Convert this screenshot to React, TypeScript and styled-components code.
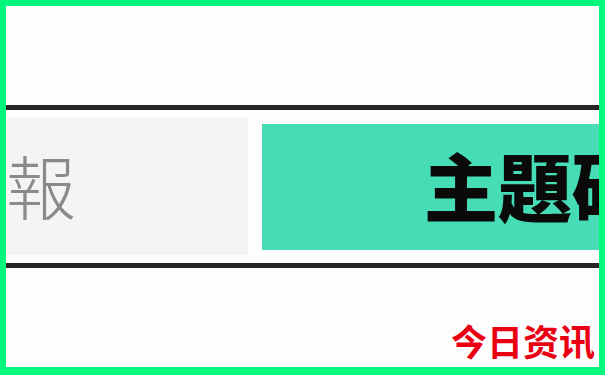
import React from "react";
import styled, { createGlobalStyle } from "styled-components";

const Global = createGlobalStyle`
  html, body { margin: 0; padding: 0; background: #ffffff; }
  body { font-family: "Noto Sans CJK TC", "Noto Sans CJK SC", "Noto Sans", sans-serif; }
`;

const Frame = styled.div`
  box-sizing: border-box;
  width: 605px;
  height: 375px;
  border-style: solid;
  border-color: #02f87c;
  border-width: 6px 6px 8px 6px;
  background: #fdfdfd;
  overflow: hidden;
  display: flex;
  flex-direction: column;
  padding-top: 99px;
`;

const Banner = styled.div`
  height: 163px;
  box-sizing: border-box;
  border-top: 5px solid #262626;
  border-bottom: 5px solid #262626;
  display: flex;
  align-items: center;
  gap: 14px;
`;

const Cell = styled.div<{ $variant: "muted" | "accent" }>`
  box-sizing: border-box;
  display: flex;
  align-items: center;
  overflow: hidden;
  white-space: nowrap;
  ${(p) =>
    p.$variant === "muted"
      ? `
    flex: 0 0 242px;
    height: 137px;
    background: #f4f4f4;
    padding-bottom: 4px;
  `
      : `
    flex: 1 1 auto;
    min-width: 0;
    height: 126px;
    background: #46dcb6;
    padding-left: 162px;
    padding-bottom: 6px;
  `}
`;

const MutedText = styled.span`
  font-family: "Noto Sans CJK TC", "Noto Sans CJK SC", sans-serif;
  font-size: 70px;
  font-weight: 300;
  line-height: 1;
  color: #8a8a8a;
  margin-left: -70px;
`;

const AccentText = styled.span`
  font-family: "Noto Sans CJK TC", "Noto Sans CJK SC", sans-serif;
  font-size: 74px;
  font-weight: 900;
  line-height: 1;
  color: #0a0a0a;
`;

const Caption = styled.div`
  display: flex;
  justify-content: flex-end;
  padding-right: 4px;
  margin-top: 54px;
  font-family: "Noto Sans CJK SC", sans-serif;
  font-size: 36px;
  font-weight: 700;
  line-height: 1;
  color: #ea0012;
`;

export default function App() {
  return (
    <>
      <Global />
      <Frame>
        <Banner>
          <Cell $variant="muted">
            <MutedText>情報</MutedText>
          </Cell>
          <Cell $variant="accent">
            <AccentText>主題碼</AccentText>
          </Cell>
        </Banner>
        <Caption>今日资讯</Caption>
      </Frame>
    </>
  );
}
